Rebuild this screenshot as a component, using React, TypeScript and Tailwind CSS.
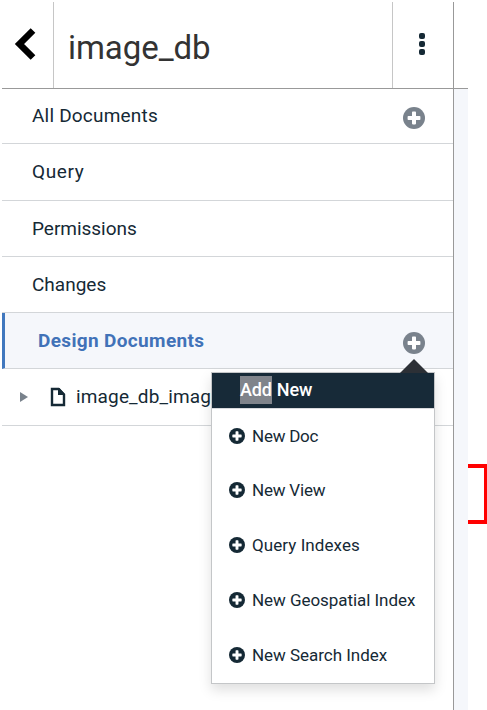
import React from "react";

function PlusCircle({ className }: { className: string }) {
  return (
    <svg viewBox="0 0 22 22" className={className}>
      <circle cx="11" cy="11" r="11" fill="currentColor" />
      <path
        d="M9.8 4.6h2.4q.8 0 .8.8V9h3.6q.8 0 .8.8v2.4q0 .8-.8.8H13v3.6q0 .8-.8.8H9.8q-.8 0-.8-.8V13H5.4q-.8 0-.8-.8V9.8q0-.8.8-.8H9V5.4q0-.8.8-.8z"
        fill="white"
      />
    </svg>
  );
}

const navItems = [
  { label: "All Documents", add: true, row: "h-[55px]", text: "tracking-[0.2px]" },
  { label: "Query", add: false, row: "h-[57px]", text: "tracking-[0.6px]" },
  { label: "Permissions", add: false, row: "h-14", text: "tracking-[-0.03px]" },
  { label: "Changes", add: false, row: "h-14", text: "tracking-[0px]" },
];

const menuItems = [
  { label: "New Doc", row: "h-[53px]", text: "tracking-[-0.25px]" },
  { label: "New View", row: "h-[55px]", text: "tracking-[-0.2px]" },
  { label: "Query Indexes", row: "h-[55px]", text: "tracking-[0.07px]" },
  { label: "New Geospatial Index", row: "h-[55px]", text: "tracking-[-0.05px]" },
  { label: "New Search Index", row: "h-[55px]", text: "tracking-[-0.03px]" },
];

function AddMenu() {
  return (
    <div className="absolute left-[209px] top-[59px] z-10 w-[224px] border border-[#c4c6c8] bg-white pb-px shadow-[0_6px_12px_rgba(0,0,0,0.13)]">
      <svg viewBox="0 0 28 14" className="absolute -top-[14px] left-[188px] h-[14px] w-7">
        <path d="M0 14 14 0 28 14z" fill="#2c3036" />
      </svg>
      <div className="relative flex h-[35px] items-center bg-[#172a38] pb-[2px] pl-7 text-[18px] font-medium text-white">
        <span className="bg-[#80848b] leading-7 tracking-[-0.2px]">Add</span>
        <span className="ml-[5px]">New</span>
      </div>
      <ul className="border-t border-[#d8dadd]">
        {menuItems.map((item) => (
          <li key={item.label} className={`flex items-center pl-[17px] text-[#152935] ${item.row}`}>
            <PlusCircle className="h-4 w-4" />
            <span className={`ml-[7px] whitespace-nowrap text-[17px] leading-6 ${item.text}`}>{item.label}</span>
          </li>
        ))}
      </ul>
    </div>
  );
}

export default function App() {
  return (
    <div className="flex h-[710px] w-[487px] overflow-hidden bg-white pl-[2px] pt-[2px] font-[Roboto,'Liberation_Sans',sans-serif] text-[#152935]">
      <div className="w-[466px] shrink-0">
        <header className="flex h-[87px] border-b border-[#999]">
          <div className="flex w-[52px] border-r border-[#c6c6c6]">
            <svg viewBox="0 0 22 34" className="ml-[12px] mt-[25px] h-[34px] w-[22px]">
              <path d="M19 3.5 5.5 17 19 30.5" fill="none" stroke="black" strokeWidth="6.6" />
            </svg>
          </div>
          <h1 className="w-[339px] border-r border-[#c6c6c6] pl-[14px] pt-[26px] text-[33px] leading-10 tracking-[-0.05px] text-[#333]">
            image_db
          </h1>
          <div className="flex w-[61px] flex-col items-center gap-[2px] border-r border-[#999] pr-[3px] pt-[31px]">
            <i className="h-[6px] w-[6px] rounded-[2px] bg-[#152935]" />
            <i className="h-[6px] w-[6px] rounded-[2px] bg-[#152935]" />
            <i className="h-[6px] w-[6px] rounded-[2px] bg-[#152935]" />
          </div>
        </header>
        <div className="flex h-[621px]">
          <nav className="w-[452px] border-r border-[#999] text-[19px]">
            {navItems.map((item) => (
              <div
                key={item.label}
                className={`flex items-center justify-between border-b border-[#d3d6d9] pl-[30px] pr-7 ${item.row}`}
              >
                <span className={`leading-6 ${item.text}`}>{item.label}</span>
                {item.add && <PlusCircle className="mt-1 h-[22px] w-[22px] text-[#79828c]" />}
              </div>
            ))}
            <div className="relative flex h-14 items-center justify-between border-b border-l-[3px] border-b-[#d3d6d9] border-l-[#4178be] bg-[#f5f7fb] pl-[33px] pr-7">
              <span className="font-bold leading-6 tracking-[0.35px] text-[#4172b8]">Design Documents</span>
              <PlusCircle className="mt-1 h-[22px] w-[22px] text-[#79828c]" />
            </div>
            <div className="relative -mt-14 h-14">
              <AddMenu />
            </div>
            <div className="flex h-[57px] items-center border-b border-[#d3d6d9] pl-[18px]">
              <svg viewBox="0 0 8 10" className="h-[10px] w-2">
                <path d="M0 0 8 5 0 10z" fill="#79828c" />
              </svg>
              <svg viewBox="0 0 16 20" className="ml-[22px] h-5 w-4">
                <path d="M2 2h6.5L14 7.5V18H2z" fill="none" stroke="#152935" strokeWidth="2.4" />
                <path d="M8 1v7h6.5V6.8L9.5 1z" fill="#152935" />
              </svg>
              <span className="ml-[10px] whitespace-nowrap leading-6 tracking-[0.15px]">image_db_imag</span>
            </div>
          </nav>
          <div className="flex-1 bg-[#f5f7fb]" />
        </div>
      </div>
      <div className="mt-[462px] h-[60px] w-[19px] border-y-4 border-r-[3px] border-[#ff0000]" />
    </div>
  );
}
